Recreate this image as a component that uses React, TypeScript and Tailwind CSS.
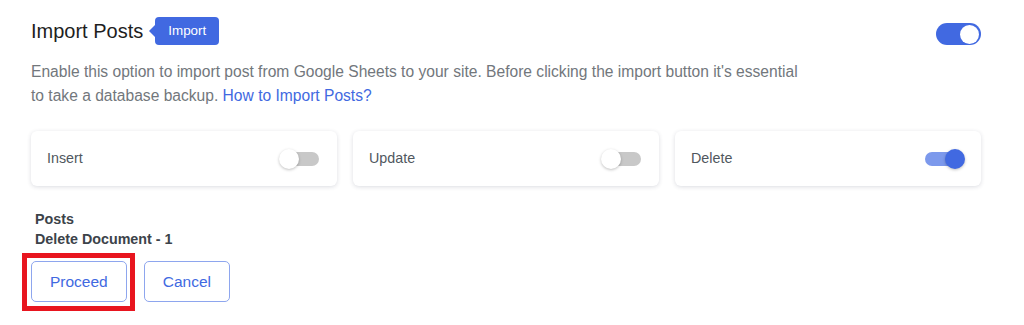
import React from "react";

function MiniSwitch({ on }: { on: boolean }) {
  return (
    <div className={on ? "relative w-[40px] h-[20px] flex items-center" : "relative w-[40px] h-[20px] flex items-center mr-[2px]"}>
      <div
        className={
          on
            ? "w-[34px] h-[14px] rounded-full bg-[#7c99ec]"
            : "ml-[6px] w-[34px] h-[14px] rounded-full bg-[#c8c8c8]"
        }
      />
      <div
        className={
          on
            ? "absolute right-0 top-0 w-[20px] h-[20px] rounded-full bg-[#4169e1] shadow-[0_1px_3px_rgba(0,0,0,0.25)]"
            : "absolute left-0 top-0 w-[20px] h-[20px] rounded-full bg-white shadow-[0_1px_3px_rgba(0,0,0,0.25)]"
        }
      />
    </div>
  );
}

const options = [
  { label: "Insert", on: false },
  { label: "Update", on: false },
  { label: "Delete", on: true },
];

export default function App() {
  return (
    <div
      className="w-[1024px] h-[325px] bg-white pl-[31px] pr-[43px] pt-[17px]"
      style={{ fontFamily: '"Liberation Sans", Arial, sans-serif' }}
    >
      {/* Header */}
      <div className="flex items-start justify-between">
        <div className="flex items-center h-[28px]">
          <h1 className="text-[20px] leading-7 text-[#1e1e1e]">Import Posts</h1>
          <div className="relative ml-[12px] h-[28px] flex items-center bg-[#4169e1] rounded-[4px] px-[13px]">
            <span className="absolute -left-[6px] top-[8px] w-0 h-0 border-y-[6px] border-y-transparent border-r-[6px] border-r-[#4169e1]" />
            <span className="text-[13.4px] text-white">Import</span>
          </div>
        </div>
        <div className="mt-[6px] w-[45px] h-[22px] rounded-full bg-[#4169e1] flex items-center justify-end pr-[2px]">
          <div className="w-[19px] h-[19px] rounded-full bg-white" />
        </div>
      </div>

      <p className="mt-[15px] w-[775px] text-[15.6px] leading-6 text-[#72777c]">
        Enable this option to import post from Google Sheets to your site. Before clicking the import button it's essential to take a database backup.{" "}
        <a className="text-[#4169e1]">How to Import Posts?</a>
      </p>

      {/* Options */}
      <div className="mt-[23px] grid grid-cols-3 gap-[16px]">
        {options.map((o) => (
          <div
            key={o.label}
            className="h-[55px] rounded-md bg-white shadow-[0_1px_4px_rgba(30,40,70,0.16)] flex items-center justify-between pl-[16px] pr-[16px]"
          >
            <span className="text-[14.3px] text-[#50575e]">{o.label}</span>
            <MiniSwitch on={o.on} />
          </div>
        ))}
      </div>

      <div className="mt-[23px] pl-[4px] text-[14.3px] leading-5 font-bold text-[#3c434a]">
        <p>Posts</p>
        <p>Delete Document - 1</p>
      </div>

      <div className="mt-[12px] flex gap-[17px]">
        <div className="relative">
          <button className="h-[41px] px-[18px] rounded-[5px] border border-[#8ea6ee] text-[15.5px] text-[#4169e1] bg-white">
            Proceed
          </button>
          <span className="absolute -left-[9px] -right-[8px] -top-[8px] -bottom-[9px] border-[5px] border-[#e8151f] pointer-events-none" />
        </div>
        <button className="h-[41px] px-[18px] rounded-[5px] border border-[#8ea6ee] text-[15.5px] text-[#4169e1] bg-white">
          Cancel
        </button>
      </div>
    </div>
  );
}
